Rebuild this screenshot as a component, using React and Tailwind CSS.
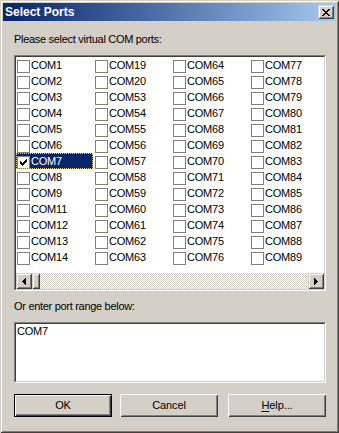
const cols = [
  ["COM1", "COM2", "COM3", "COM4", "COM5", "COM6", "COM7", "COM8", "COM9", "COM11", "COM12", "COM13", "COM14"],
  ["COM19", "COM20", "COM53", "COM54", "COM55", "COM56", "COM57", "COM58", "COM59", "COM60", "COM61", "COM62", "COM63"],
  ["COM64", "COM65", "COM66", "COM67", "COM68", "COM69", "COM70", "COM71", "COM72", "COM73", "COM74", "COM75", "COM76"],
  ["COM77", "COM78", "COM79", "COM80", "COM81", "COM82", "COM83", "COM84", "COM85", "COM86", "COM87", "COM88", "COM89"],
];
const items = cols.flat();

function Check({ checked }) {
  return (
    <span className="w-[13px] h-[13px] mt-[3px] ml-[1px] shrink-0 border border-[#808080] bg-white flex items-center justify-center">
      {checked && (
        <svg width="7" height="7" viewBox="0 0 7 7" shapeRendering="crispEdges">
          <path d="M6 0h1v3h-1v1h-1v1h-1v1h-1v1h-1v-1h-1v-1h-1v-3h1v1h1v1h1v-1h1v-1h1z" fill="black" />
        </svg>
      )}
    </span>
  );
}

function Item({ label }) {
  const sel = label === "COM7";
  return (
    <div
      className={
        sel
          ? "w-[77px] h-[16px] flex items-start bg-[#0A246A] text-white outline outline-1 outline-dotted outline-[#d8cf8a] -outline-offset-1"
          : "w-[77px] h-[16px] flex items-start text-black"
      }
    >
      <Check checked={sel} />
      <span className="leading-[16px] pl-[1px] tracking-[-0.2px]">{label}</span>
    </div>
  );
}

function Raised({ className, children }) {
  return (
    <div
      className={
        "bg-[#D4D0C8] flex items-center justify-center shadow-[inset_1px_1px_#D4D0C8,inset_-1px_-1px_#404040,inset_2px_2px_#ffffff,inset_-2px_-2px_#808080] " +
        className
      }
    >
      {children}
    </div>
  );
}

function Button({ children, def, className }) {
  return (
    <div className={(def ? "border border-black " : "") + "w-[98px] h-[23px] flex " + className}>
      <div
        className={
          def
            ? "flex-1 flex items-center justify-center shadow-[inset_1px_1px_#ffffff,inset_-1px_-1px_#404040,inset_-2px_-2px_#808080]"
            : "flex-1 flex items-center justify-center shadow-[inset_1px_1px_#ffffff,inset_-1px_-1px_#404040,inset_2px_2px_#D4D0C8,inset_-2px_-2px_#808080]"
        }
      >
        <span className="leading-[13px] tracking-[-0.1px]">{children}</span>
      </div>
    </div>
  );
}

function Sunken({ className, children }) {
  return (
    <div className={"flex border border-t-[#808080] border-l-[#808080] border-r-white border-b-white " + className}>
      <div className="flex-1 flex flex-col min-w-0 border border-t-[#404040] border-l-[#404040] border-r-[#D4D0C8] border-b-[#D4D0C8] bg-white overflow-hidden">
        {children}
      </div>
    </div>
  );
}

export default function App() {
  return (
    <div className="w-[339px] h-[433px] bg-[#D4D0C8] p-[3px] flex flex-col shadow-[inset_1px_1px_#D4D0C8,inset_-1px_-1px_#404040,inset_2px_2px_#ffffff,inset_-2px_-2px_#808080] font-['Liberation_Sans',Arial,sans-serif] text-[11px] text-black">
      <div className="h-[18px] shrink-0 flex items-center justify-between bg-linear-to-r from-[#0A246A] to-[#A6CAF0] px-[2px]">
        <span className="text-white font-bold text-[12px] leading-[12px]">Select Ports</span>
        <Raised className="w-[16px] h-[14px]">
          <svg width="8" height="7" viewBox="0 0 8 7" shapeRendering="crispEdges">
            <path
              d="M0 0h2v1h1v1h2v-1h1v-1h2v1h-1v1h-1v1h-1v1h1v1h1v1h1v1h-2v-1h-1v-1h-2v1h-1v1h-2v-1h1v-1h1v-1h1v-1h-1v-1h-1v-1h-1z"
              fill="black"
            />
          </svg>
        </Raised>
      </div>
      <div className="flex flex-col pl-[11px] pr-[10px] pt-[12px]">
        <div className="leading-[13px] tracking-[-0.3px]">Please select virtual COM ports:</div>
        <Sunken className="mt-[9px] w-[312px] h-[236px]">
          <div className="h-[216px] overflow-hidden">
            <div className="grid grid-flow-col grid-rows-[repeat(13,16px)] auto-cols-[78px]">
              {items.map((l) => (
                <Item key={l} label={l} />
              ))}
            </div>
          </div>
          <div className="h-[16px] flex">
            <Raised className="w-[16px] h-[16px]">
              <svg width="4" height="7" viewBox="0 0 4 7" shapeRendering="crispEdges">
                <path d="M3 0h1v7h-1v-1h-1v-1h-1v-1h-1v-1h1v-1h1v-1h1z" fill="black" />
              </svg>
            </Raised>
            <Raised className="w-[8px] h-[16px]" />
            <div className="flex-1 bg-[repeating-conic-gradient(#D4D0C8_0%_25%,#ffffff_0%_50%)] bg-[length:2px_2px]" />
            <Raised className="w-[16px] h-[16px]">
              <svg width="4" height="7" viewBox="0 0 4 7" shapeRendering="crispEdges">
                <path d="M0 0h1v1h1v1h1v1h1v1h-1v1h-1v1h-1v1h-1z" fill="black" />
              </svg>
            </Raised>
          </div>
        </Sunken>
        <div className="mt-[9px] leading-[13px] tracking-[-0.3px]">Or enter port range below:</div>
        <Sunken className="mt-[9px] w-[312px] h-[61px]">
          <div className="pl-[1px] pt-[1px] leading-[13px] tracking-[-0.2px]">COM7</div>
        </Sunken>
        <div className="mt-[11px] flex">
          <Button def>OK</Button>
          <Button className="ml-[8px]">Cancel</Button>
          <Button className="ml-[10px]">
            <span className="underline underline-offset-2">H</span>elp...
          </Button>
        </div>
      </div>
    </div>
  );
}
